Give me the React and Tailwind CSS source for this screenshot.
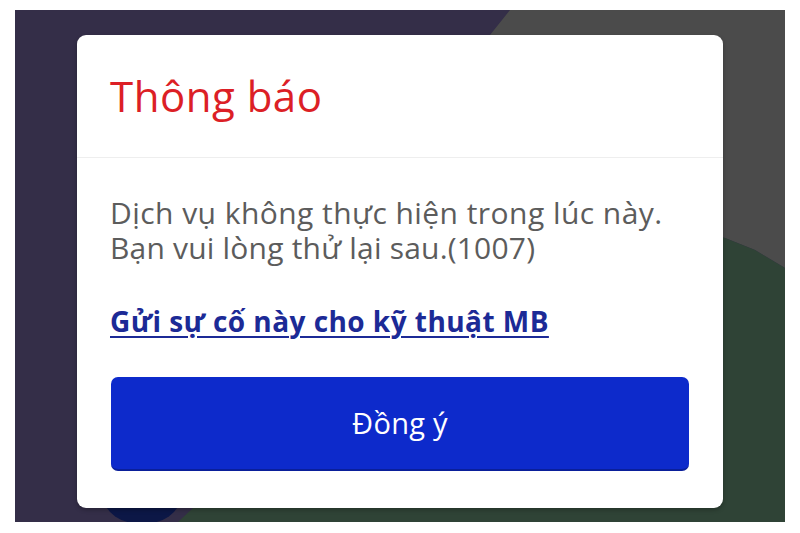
export default function App() {
  return (
    <div className="w-[800px] h-[533px] bg-white pl-[15px] pt-[10px]" style={{ fontFamily: "'Open Sans', 'Noto Sans', sans-serif" }}>
      <div className="relative w-[770px] h-[512px] overflow-hidden bg-[#342e48] pl-[62px] pt-[25px]">
        <svg className="absolute inset-0" width="770" height="512" viewBox="15 10 770 512">
          <polygon points="510,10 785,10 785,268 755,250 725,238 600,210 470,60" fill="#4b4b4b" />
          <polygon points="600,210 725,238 755,250 785,268 785,522 178,522 330,380" fill="#2f4336" />
          <ellipse cx="142" cy="498" rx="38" ry="26" fill="#0c1746" />
        </svg>
        <div className="relative w-[646px] h-[473px] bg-white rounded-[9px] shadow-[0_2px_4px_rgba(0,0,0,0.25)] flex flex-col">
          <div className="h-[123px] border-b border-[#eeeeee] flex items-center px-[33px]">
            <span className="text-[42px] leading-[50px] tracking-[0.5px] text-[#dc1f26]">Thông báo</span>
          </div>
          <div className="px-[33px] pt-[37px]">
            <div className="text-[30px] leading-[35px] text-[#5c5c5c]">
              <p className="tracking-[0.45px]">Dịch vụ không thực hiện trong lúc này.</p>
              <p className="tracking-[0.2px]">Bạn vui lòng thử lại sau.(1007)</p>
            </div>
            <a className="block mt-[39px] text-[28px] leading-[34px] tracking-[0.45px] font-bold text-[#1c2a96] underline underline-offset-[4px] decoration-[2px]">
              Gửi sự cố này cho kỹ thuật MB
            </a>
          </div>
          <div className="mt-auto px-[34px] pb-[37px]">
            <div className="h-[94px] rounded-[7px] bg-[#0d2acb] border-b-[2px] border-[#0a1f9a] flex items-center justify-center">
              <span className="text-[29px] tracking-[0.3px] text-white">Đồng ý</span>
            </div>
          </div>
        </div>
      </div>
    </div>
  );
}
